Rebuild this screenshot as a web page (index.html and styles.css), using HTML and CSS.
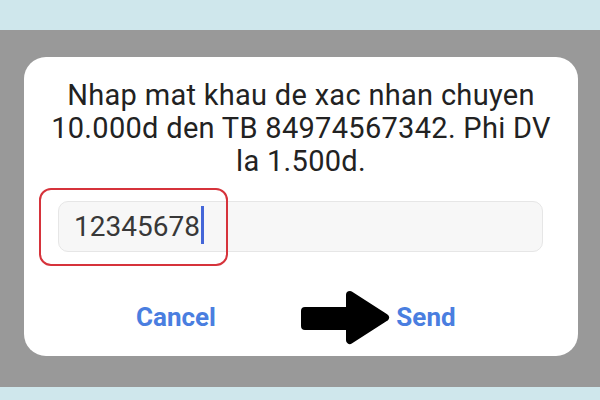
FILE: index.html
```html
<!DOCTYPE html>
<html lang="en">
<head>
  <meta charset="UTF-8">
  <title>Xac nhan chuyen tien</title>
  <link rel="stylesheet" href="styles.css">
</head>
<body>
  <div class="screen">
    <div class="dialog">
      <p class="message">Nhap mat khau de xac nhan chuyen 10.000d den TB 84974567342. Phi DV la 1.500d.</p>

      <div class="field">
        <div class="input">12345678<span class="caret"></span></div>
        <!-- annotation around the typed password -->
        <div class="highlight"></div>
      </div>

      <div class="actions">
        <button type="button" class="action">Cancel</button>
        <button type="button" class="action">Send</button>
      </div>

      <!-- annotation arrow pointing at Send -->
      <svg class="pointer" width="92" height="56" viewBox="0 0 92 56">
        <path d="M7 21 H52 V5 L87 27.5 L52 50 V36 H7 Z" fill="#000" stroke="#000" stroke-width="8" stroke-linejoin="round"/>
      </svg>
    </div>
  </div>
</body>
</html>
```

FILE: styles.css
```css
body {
  margin: 0;
  height: 400px;
  background: #cfe7ec;
  font-family: Roboto, "Liberation Sans", sans-serif;
  overflow: hidden;
}
.screen {
  margin-top: 30px;
  height: 357px;
  box-sizing: border-box;
  padding: 27px 22px 0 24px;
  background: #999999;
}
.dialog {
  position: relative;
  height: 299px;
  box-sizing: border-box;
  padding-top: 22px;
  background: #fff;
  border-radius: 22px;
}
.message {
  margin: 0 auto;
  max-width: 500px;
  font-size: 29px;
  line-height: 33px;
  letter-spacing: 0.3px;
  color: #222;
  text-align: center;
}
.field {
  position: relative;
  margin: 23px 35px 0 34px;
}
.input {
  height: 51px;
  box-sizing: border-box;
  padding-left: 15px;
  line-height: 49px;
  font-size: 28px;
  color: #383838;
  background: #f7f7f7;
  border: 1px solid #e6e6e6;
  border-radius: 10px;
}
.caret {
  display: inline-block;
  width: 3px;
  height: 38px;
  margin-left: 1px;
  vertical-align: -8px;
  background: #4466d8;
}
.highlight {
  position: absolute;
  left: -19px;
  top: -13px;
  width: 189px;
  height: 78px;
  box-sizing: border-box;
  border: 2px solid #d6333b;
  border-radius: 12px;
}
.actions {
  display: grid;
  grid-template-columns: 1fr 1fr;
  column-gap: 66px;
  margin-top: 50px;
  padding: 0 60px;
}
.action {
  padding: 0;
  border: none;
  background: none;
  font-family: Roboto, "Liberation Sans", sans-serif;
  font-size: 26px;
  font-weight: bold;
  line-height: 30px;
  color: #4a7ee0;
  cursor: pointer;
}
.pointer {
  position: absolute;
  left: 274px;
  top: 233px;
}
```
